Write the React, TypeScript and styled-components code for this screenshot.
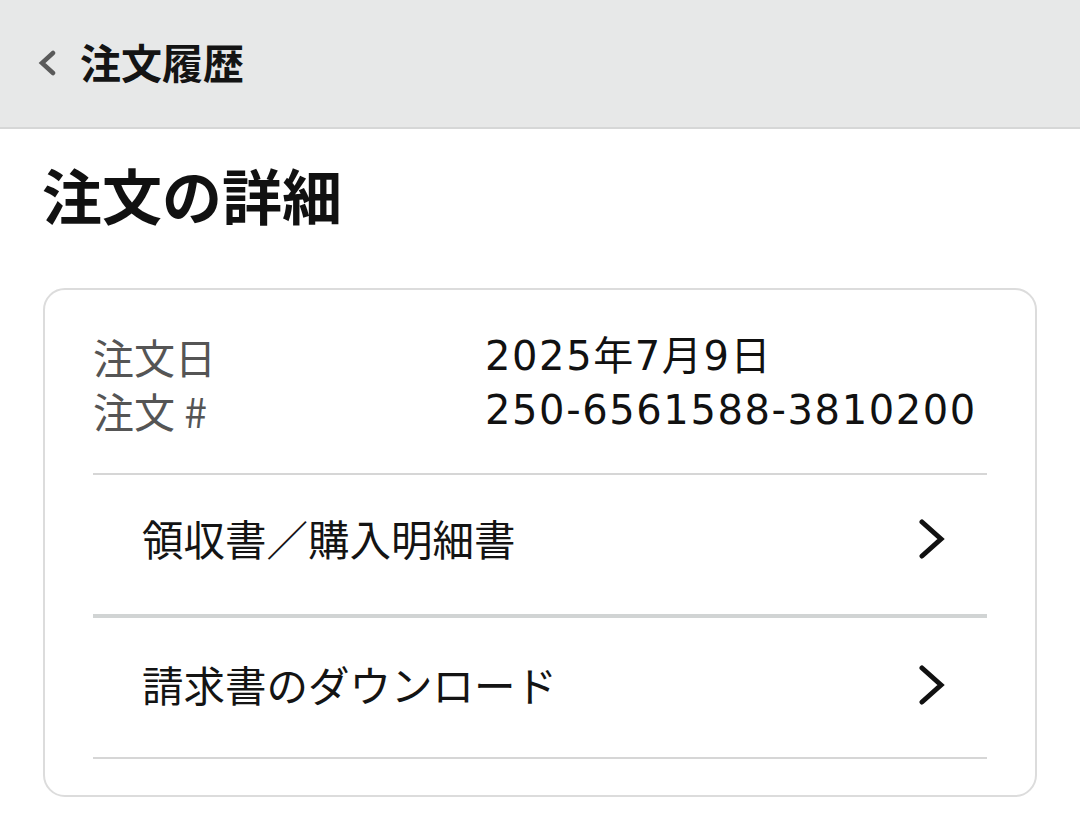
import React from "react";
import styled, { createGlobalStyle } from "styled-components";

const GlobalStyle = createGlobalStyle`
  html, body { margin: 0; padding: 0; background: #ffffff; }
  body {
    font-family: "Noto Sans CJK JP", "Noto Sans", sans-serif;
    color: #111111;
    -webkit-font-smoothing: antialiased;
  }
`;

const Page = styled.div`
  width: 1080px;
  min-height: 817px;
  background: #ffffff;
`;

const TopBar = styled.header`
  height: 127px;
  background: #e7e8e8;
  border-bottom: 2px solid #d6d7d7;
  display: flex;
  align-items: center;
  gap: 22px;
  padding: 0 0 0 38px;
  box-sizing: content-box;
`;

const BackIcon = styled.svg`
  width: 20px;
  height: 26px;
  flex-shrink: 0;
  margin-top: -2px;
`;

const TopTitle = styled.h1`
  margin: 0;
  font-size: 41px;
  font-weight: 700;
  line-height: 1;
  color: #141414;
  margin-top: -4px;
`;

const Heading = styled.h2`
  margin: 0;
  padding: 31px 0 0 42px;
  height: 119px;
  box-sizing: border-box;
  font-size: 60px;
  font-weight: 700;
  line-height: 68px;
  color: #111111;
`;

const Card = styled.section`
  margin: 40px 43px 0 43px;
  border: 2px solid #dcdcdc;
  border-radius: 22px;
  padding: 39px 48px 36px 48px;
`;

const InfoGrid = styled.dl`
  margin: 0;
  display: grid;
  grid-template-columns: 392px 1fr;
  row-gap: 0;
  padding-bottom: 36px;
  border-bottom: 2px solid #d6d6d6;
`;

const Label = styled.dt`
  margin: 0;
  font-size: 41px;
  line-height: 54px;
  height: 54px;
  overflow: visible;
  color: #555555;
  font-weight: 400;
`;

const Value = styled.dd`
  margin: 0;
  font-family: "DejaVu Sans", "Noto Sans CJK JP", sans-serif;
  font-size: 40px;
  line-height: 54px;
  height: 54px;
  color: #111111;
  letter-spacing: 1.6px;
`;

const LinkRow = styled.a<{ $thick?: boolean }>`
  display: flex;
  align-items: center;
  justify-content: space-between;
  height: ${(p) => (p.$thick ? "143px" : "141px")};
  padding: 0 42px ${(p) => (p.$thick ? "12px" : "6px")} 49px;
  box-sizing: border-box;
  border-bottom: ${(p) => (p.$thick ? "4px solid #d1d4d4" : "2px solid #d6d6d6")};
  color: #141414;
  text-decoration: none;
`;

const LinkText = styled.span`
  font-size: 41.5px;
  line-height: 1;
  font-weight: 400;
`;

const Chevron = styled.svg`
  width: 26px;
  height: 40px;
  flex-shrink: 0;
`;

const ArrowRight = () => (
  <Chevron viewBox="0 0 26 40">
    <polyline
      points="3,3 22,20 3,37"
      fill="none"
      stroke="#111111"
      strokeWidth="5"
      strokeLinecap="round"
      strokeLinejoin="miter"
    />
  </Chevron>
);

export default function App() {
  return (
    <Page>
      <GlobalStyle />
      <TopBar>
        <BackIcon viewBox="0 0 20 26">
          <polyline
            points="15,3 4,13 15,23"
            fill="none"
            stroke="#5a5a5a"
            strokeWidth="4.5"
            strokeLinecap="round"
          />
        </BackIcon>
        <TopTitle>注文履歴</TopTitle>
      </TopBar>
      <Heading>注文の詳細</Heading>
      <Card>
        <InfoGrid>
          <Label>注文日</Label>
          <Value>2025年7月9日</Value>
          <Label>注文 #</Label>
          <Value>250-6561588-3810200</Value>
        </InfoGrid>
        <LinkRow href="#" $thick>
          <LinkText>領収書／購入明細書</LinkText>
          <ArrowRight />
        </LinkRow>
        <LinkRow href="#">
          <LinkText>請求書のダウンロード</LinkText>
          <ArrowRight />
        </LinkRow>
      </Card>
    </Page>
  );
}
